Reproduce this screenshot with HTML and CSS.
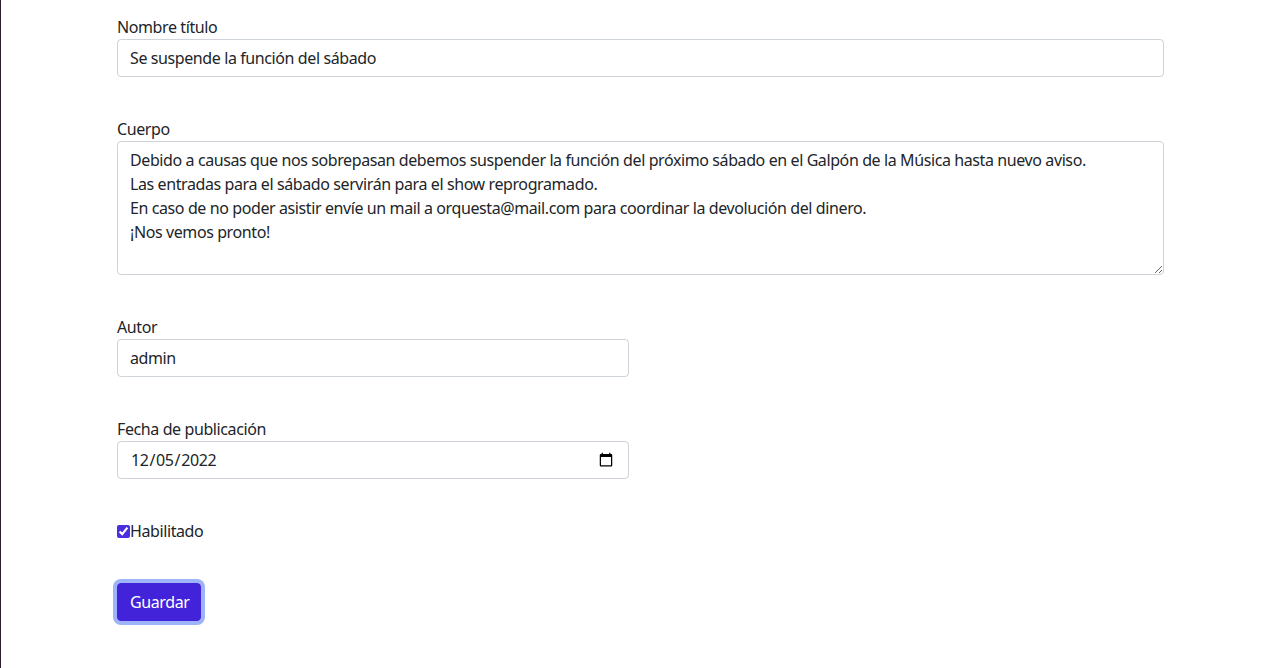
FILE: index.html
```html
<!DOCTYPE html>
<html lang="es">
<head>
<meta charset="utf-8">
<title>Editar noticia</title>
<link rel="stylesheet" href="styles.css">
</head>
<body>
<div class="page">
  <form class="news-form">
    <div class="field">
      <label class="field-label" for="titulo">Nombre título</label>
      <input class="form-control" id="titulo" type="text" value="Se suspende la función del sábado">
    </div>
    <div class="field">
      <label class="field-label" for="cuerpo">Cuerpo</label>
      <textarea class="form-control textarea" id="cuerpo" rows="5" spellcheck="false">Debido a causas que nos sobrepasan debemos suspender la función del próximo sábado en el Galpón de la Música hasta nuevo aviso.
Las entradas para el sábado servirán para el show reprogramado.
En caso de no poder asistir envíe un mail a orquesta@mail.com para coordinar la devolución del dinero.
¡Nos vemos pronto!</textarea>
    </div>
    <div class="field">
      <label class="field-label" for="autor">Autor</label>
      <input class="form-control half" id="autor" type="text" value="admin">
    </div>
    <div class="field">
      <label class="field-label" for="fecha">Fecha de publicación</label>
      <input class="form-control half" id="fecha" type="date" value="2022-12-05">
    </div>
    <div class="field check-row">
      <input class="check" id="habilitado" type="checkbox" checked><label for="habilitado">Habilitado</label>
    </div>
    <div class="actions">
      <button type="button" class="btn-save">Guardar</button>
    </div>
  </form>
</div>
</body>
</html>
```

FILE: styles.css
```css
* { box-sizing: border-box; }
html, body { margin: 0; padding: 0; background: #fff; }
body {
  font-family: "Noto Sans", "Open Sans", sans-serif;
  font-size: 16px;
  line-height: 1.5;
  letter-spacing: -0.4px;
  color: #212529;
}
.page {
  border-left: 1px solid #2c1b2c;
  min-height: 668px;
  padding: 15px 0 0 116px;
}
.news-form {
  width: 1047px;
  display: flex;
  flex-direction: column;
  gap: 40px;
}
.field { display: flex; flex-direction: column; }
.field-label { display: block; height: 24px; }
.form-control {
  display: block;
  width: 100%;
  height: 38px;
  padding: 6px 12px;
  font-family: inherit;
  font-size: 16px;
  line-height: 1.5;
  letter-spacing: -0.4px;
  color: #212529;
  background: #fff;
  border: 1px solid #ced4da;
  border-radius: 4px;
  outline: none;
}
.textarea { height: 134px; resize: vertical; }
.half { width: 512px; }
.check-row { flex-direction: row; align-items: center; height: 24px; }
.check {
  margin: 0;
  width: 13px;
  height: 13px;
  accent-color: #4a2fe0;
}
.actions { display: flex; }
.btn-save {
  font-family: inherit;
  font-size: 16px;
  line-height: 1.5;
  letter-spacing: -0.4px;
  color: #fff;
  background: #4223d9;
  border: 1px solid #4223d9;
  border-radius: 4px;
  padding: 6px 12px;
  height: 38px;
  width: 84px;
  box-shadow: 0 0 0 4px #9db3fa;
  cursor: pointer;
}
```
